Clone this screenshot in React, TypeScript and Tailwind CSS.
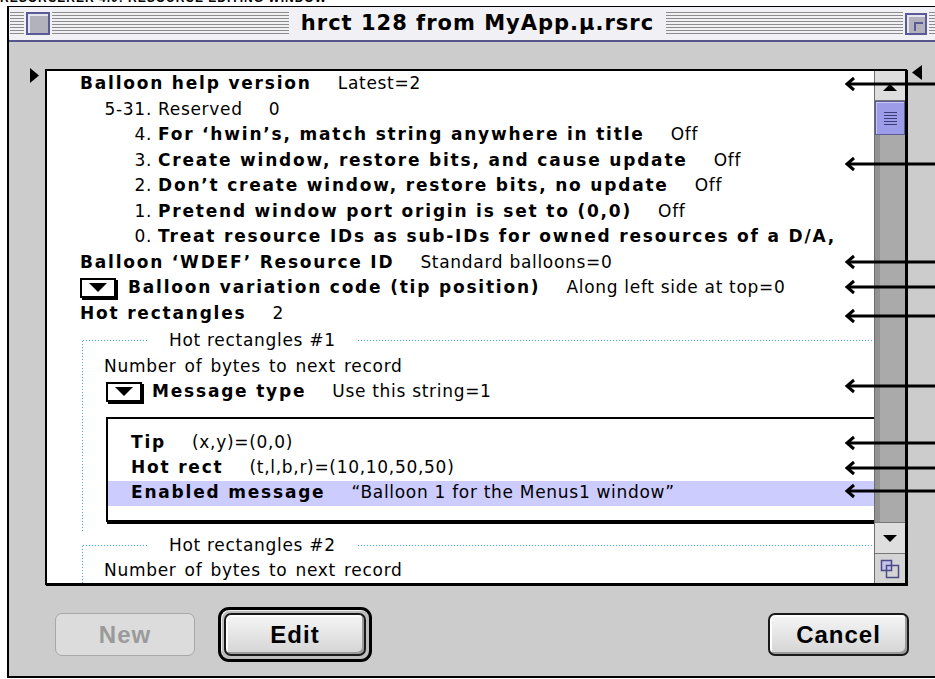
import React from "react";

// title bar pinstripes
const stripes =
  "bg-[repeating-linear-gradient(to_bottom,#8c8c8c_0px,#8c8c8c_1px,#f1f1f5_1px,#f1f1f5_3px)]";
const dotsH =
  "h-px bg-[repeating-linear-gradient(to_right,#38aef0_0px,#38aef0_1px,transparent_1px,transparent_3px)]";
const dotsV =
  "w-px bg-[repeating-linear-gradient(to_bottom,#38aef0_0px,#38aef0_1px,transparent_1px,transparent_3px)]";

type RowProps = {
  label: string;
  value?: string;
  bold?: boolean;
  num?: string;
  popup?: boolean;
  popupGap?: string;
  h?: string;
  className?: string;
};

function Popup({ gap = "mr-[12px]" }: { gap?: string }) {
  return (
    <span
      className={`flex items-center justify-center w-[36px] h-[20px] border-2 border-black bg-white shadow-[2px_2px_0_#000] ${gap}`}
    >
      <svg width="18" height="9" viewBox="0 0 18 9">
        <polygon points="0,0 18,0 9,9" fill="#000" />
      </svg>
    </span>
  );
}

function Row({ label, value, bold = true, num, popup, popupGap, h = "h-[25.5px]", className = "" }: RowProps) {
  return (
    <div className={`${h} flex items-center whitespace-nowrap ${className}`}>
      {num !== undefined && (
        <span className="w-[78px] shrink-0 text-right pr-[6px] tracking-[0.7px]">{num}</span>
      )}
      {popup && <Popup gap={popupGap} />}
      <span className={bold ? "font-bold tracking-[1.8px]" : "tracking-[0.7px] [word-spacing:2px]"}>{label}</span>
      {value !== undefined && <span className="ml-[26px] tracking-[0.7px]">{value}</span>}
    </div>
  );
}

function GroupHeader({ title }: { title: string }) {
  return (
    <div className="h-[25.5px] flex items-center whitespace-nowrap">
      <div className={`${dotsH} w-[64px] shrink-0`} />
      <span className="px-[22px] tracking-[0.7px]">{title}</span>
      <div className={`${dotsH} flex-1`} />
    </div>
  );
}

function Pointer({ y }: { y: number }) {
  return (
    <svg
      className="absolute left-[843px]"
      style={{ top: y - 8 }}
      width="92"
      height="16"
      viewBox="0 0 92 16"
    >
      <path d="M11 2 L4 8 L11 14" fill="none" stroke="#000" strokeWidth="3" />
      <path d="M4 8 H92" stroke="#000" strokeWidth="3" />
    </svg>
  );
}

function MacButton({ label, disabled }: { label: string; disabled?: boolean }) {
  return (
    <div
      className={`flex items-center justify-center h-[43px] rounded-[7px] font-['Liberation_Sans',Arial,sans-serif] font-bold text-[24px] tracking-[1px] ${
        disabled
          ? "w-[140px] border border-[#a8a8a8] bg-[#dcdcdc] text-[#9a9a9a]"
          : "border-2 border-[#1a1a1a] bg-[linear-gradient(to_bottom,#f6f6f6,#d4d4d4)] text-black shadow-[inset_-2px_-2px_0_#9a9a9a,inset_2px_2px_0_#ffffff]"
      }`}
    >
      {label}
    </div>
  );
}

export default function App() {
  const pointers = [84, 164, 262, 287, 316, 386, 443, 468, 491];

  return (
    <div className="relative w-[935px] h-[679px] bg-white overflow-hidden font-['DejaVu_Sans',sans-serif] text-[17px] text-black">
      {/* caption above the window */}
      <div className="h-[6px] overflow-hidden">
        <div className="-mt-[8px] text-[12px] leading-[12px] font-bold tracking-[1px] whitespace-nowrap font-['Liberation_Sans',Arial,sans-serif]">
          RESORCERER 4.0: RESOURCE EDITING WINDOW
        </div>
      </div>

      {/* window */}
      <div className="ml-[7px] w-[950px] h-[672px] flex flex-col border-l-2 border-t border-b-2 border-black">
        {/* title bar */}
        <div className="h-[35px] shrink-0 flex items-center bg-[#f1f1f5] border-b-2 border-[#56568c] pl-[1px]">
          <div className={`${stripes} w-[14px] h-[23px]`} />
          <div className="mx-[2px] w-[24px] h-[23px] border-2 border-[#5a5a96] bg-[#b2b2bc] shadow-[inset_2px_2px_0_#e6e6ee]" />
          <div className={`${stripes} flex-1 h-[23px]`} />
          <div className="px-[12px] font-['DejaVu_Sans',sans-serif] font-bold text-[21px] tracking-[1px] whitespace-nowrap">
            hrct 128 from MyApp.µ.rsrc
          </div>
          <div className={`${stripes} flex-1 h-[23px]`} />
          <div className="mx-[2px] w-[22px] h-[22px] border-2 border-[#5a5a96] bg-[#b2b2bc] shadow-[inset_2px_2px_0_#e6e6ee] flex items-end justify-end p-[2px]">
            <div className="w-[9px] h-[9px] border-l-2 border-t-2 border-[#5a5a96]" />
          </div>
          <div className={`${stripes} w-[28px] h-[23px]`} />
        </div>

        {/* body */}
        <div className="flex-1 flex flex-col bg-[#cccccc]">
          <div className="flex items-start mt-[27px]">
            <svg className="ml-[21px] mt-[-1px] shrink-0" width="9" height="15" viewBox="0 0 9 15">
              <polygon points="0,0 9,7.5 0,15" fill="#000" />
            </svg>

            {/* resource list */}
            <div className="ml-[6px] w-[862px] h-[516px] flex border-2 border-black bg-white shadow-[1px_1px_0_#000] overflow-hidden">
              <div className="w-[827px] overflow-hidden">
                <div className="pl-[33px] w-[1000px]">
                  <Row label="Balloon help version" value="Latest=2" />
                  <Row num="5-31." label="Reserved" bold={false} value="0" />
                  <Row num="4." label="For ‘hwin’s, match string anywhere in title" value="Off" />
                  <Row num="3." label="Create window, restore bits, and cause update" value="Off" />
                  <Row num="2." label="Don’t create window, restore bits, no update" value="Off" />
                  <Row num="1." label="Pretend window port origin is set to (0,0)" value="Off" />
                  <Row num="0." label="Treat resource IDs as sub-IDs for owned resources of a D/A," />
                  <Row label="Balloon ‘WDEF’ Resource ID" value="Standard balloons=0" />
                  <Row popup label="Balloon variation code (tip position)" value="Along left side at top=0" />
                  <Row label="Hot rectangles" value="2" />
                </div>

                {/* hot rectangle #1 */}
                <div className="ml-[35px] mt-[2px] flex">
                  <div className={`${dotsV} mt-[13px] shrink-0`} />
                  <div className="flex-1 min-w-0 pb-[11px]">
                    <GroupHeader title="Hot rectangles #1" />
                    <Row label="Number of bytes to next record" bold={false} className="pl-[21px]" />
                    <Row popup popupGap="mr-[10px]" label="Message type" value="Use this string=1" className="pl-[23px]" />
                    <div className="ml-[23px] mt-[12px] w-[800px] border-2 border-black shadow-[1px_2px_0_#000] pt-[12px] pb-[14px]">
                      <Row h="h-[25px]" label="Tip" value="(x,y)=(0,0)" className="pl-[23px]" />
                      <Row h="h-[25px]" label="Hot rect" value="(t,l,b,r)=(10,10,50,50)" className="pl-[23px]" />
                      <Row
                        h="h-[25px]"
                        label="Enabled message"
                        value="“Balloon 1 for the Menus1 window”"
                        className="pl-[23px] bg-[#ccccff]"
                      />
                    </div>
                  </div>
                </div>

                {/* hot rectangle #2 */}
                <div className="ml-[35px] flex">
                  <div className={`${dotsV} mt-[13px] shrink-0`} />
                  <div className="flex-1 min-w-0">
                    <GroupHeader title="Hot rectangles #2" />
                    <Row label="Number of bytes to next record" bold={false} className="pl-[21px]" />
                  </div>
                </div>
              </div>

              {/* scroll bar */}
              <div className="w-[31px] shrink-0 flex flex-col border-l border-[#6e6e6e] bg-[#aaaaaa] shadow-[inset_5px_0_0_#939393]">
                <div className="h-[30px] flex items-end justify-center pb-[9px] bg-[#dedede] border-b border-[#777]">
                  <svg width="14" height="7" viewBox="0 0 14 7">
                    <polygon points="0,7 14,7 7,0" fill="#000" />
                  </svg>
                </div>
                <div className="h-[34px] flex flex-col items-center justify-center gap-[2px] bg-[#9c9ce8] border border-[#5a5a96] shadow-[inset_1px_1px_0_#c8c8f4]">
                  {[0, 1, 2, 3, 4].map((i) => (
                    <div key={i} className="w-[13px] h-px bg-[#3c3c7a]" />
                  ))}
                </div>
                <div className="flex-1" />
                <div className="h-[31px] flex items-center justify-center bg-[#dedede] border-t border-[#777]">
                  <svg width="14" height="7" viewBox="0 0 14 7">
                    <polygon points="0,0 14,0 7,7" fill="#000" />
                  </svg>
                </div>
                <div className="h-[30px] flex items-center justify-center bg-[#d4d4d4] border-t border-[#777]">
                  <svg width="20" height="20" viewBox="0 0 20 20" fill="none">
                    <rect x="1.5" y="1.5" width="10" height="10" fill="#c4c4ec" stroke="#4a4a86" strokeWidth="1.5" />
                    <rect x="6.5" y="6.5" width="12" height="12" stroke="#4a4a86" strokeWidth="1.5" />
                  </svg>
                </div>
              </div>
            </div>

            <svg className="ml-[5px] mt-[-4px] shrink-0" width="10" height="15" viewBox="0 0 10 15">
              <polygon points="10,0 0,7.5 10,15" fill="#000" />
            </svg>
          </div>

          {/* buttons */}
          <div className="mt-[22px] flex items-center">
            <div className="ml-[46px]">
              <MacButton label="New" disabled />
            </div>
            <div className="ml-[23px] w-[154px] h-[55px] rounded-[11px] border-[3px] border-black bg-[#bdbdbd] p-[3px] shadow-[inset_1px_1px_0_#eee]">
              <MacButton label="Edit" />
            </div>
            <div className="ml-auto mr-[48px] w-[141px]">
              <MacButton label="Cancel" />
            </div>
          </div>
        </div>
      </div>

      {/* call-out arrows */}
      {pointers.map((y) => (
        <Pointer key={y} y={y} />
      ))}
    </div>
  );
}
